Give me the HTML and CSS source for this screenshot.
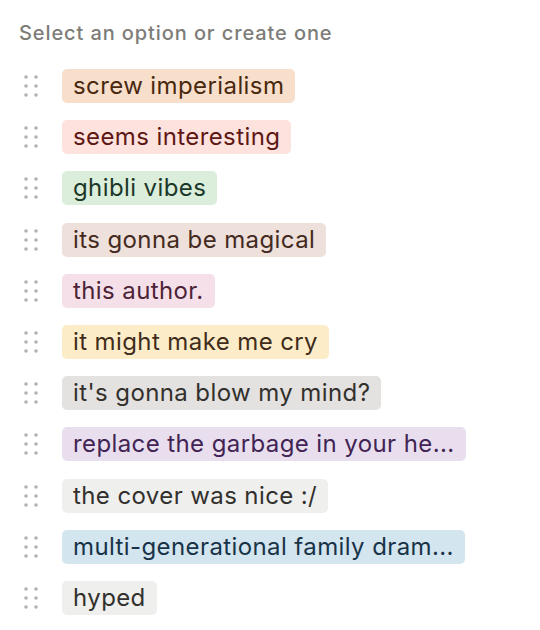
FILE: index.html
```html
<!DOCTYPE html>
<html lang="en">
<head>
  <meta charset="UTF-8" />
  <title>Select an option</title>
  <link rel="stylesheet" href="styles.css">
</head>
<body>
  <div class="menu">
    <div class="menu-title">Select an option or create one</div>

    <ul class="options">
      <li class="option">
        <svg class="handle" viewBox="0 0 14 22"><circle cx="2" cy="2" r="1.8"/><circle cx="12" cy="2" r="1.8"/><circle cx="2" cy="11" r="1.8"/><circle cx="12" cy="11" r="1.8"/><circle cx="2" cy="20" r="1.8"/><circle cx="12" cy="20" r="1.8"/></svg>
        <span class="tag orange">screw imperialism</span>
      </li>
      <li class="option">
        <svg class="handle" viewBox="0 0 14 22"><circle cx="2" cy="2" r="1.8"/><circle cx="12" cy="2" r="1.8"/><circle cx="2" cy="11" r="1.8"/><circle cx="12" cy="11" r="1.8"/><circle cx="2" cy="20" r="1.8"/><circle cx="12" cy="20" r="1.8"/></svg>
        <span class="tag red">seems interesting</span>
      </li>
      <li class="option">
        <svg class="handle" viewBox="0 0 14 22"><circle cx="2" cy="2" r="1.8"/><circle cx="12" cy="2" r="1.8"/><circle cx="2" cy="11" r="1.8"/><circle cx="12" cy="11" r="1.8"/><circle cx="2" cy="20" r="1.8"/><circle cx="12" cy="20" r="1.8"/></svg>
        <span class="tag green">ghibli vibes</span>
      </li>
      <li class="option">
        <svg class="handle" viewBox="0 0 14 22"><circle cx="2" cy="2" r="1.8"/><circle cx="12" cy="2" r="1.8"/><circle cx="2" cy="11" r="1.8"/><circle cx="12" cy="11" r="1.8"/><circle cx="2" cy="20" r="1.8"/><circle cx="12" cy="20" r="1.8"/></svg>
        <span class="tag brown">its gonna be magical</span>
      </li>
      <li class="option">
        <svg class="handle" viewBox="0 0 14 22"><circle cx="2" cy="2" r="1.8"/><circle cx="12" cy="2" r="1.8"/><circle cx="2" cy="11" r="1.8"/><circle cx="12" cy="11" r="1.8"/><circle cx="2" cy="20" r="1.8"/><circle cx="12" cy="20" r="1.8"/></svg>
        <span class="tag pink">this author.</span>
      </li>
      <li class="option">
        <svg class="handle" viewBox="0 0 14 22"><circle cx="2" cy="2" r="1.8"/><circle cx="12" cy="2" r="1.8"/><circle cx="2" cy="11" r="1.8"/><circle cx="12" cy="11" r="1.8"/><circle cx="2" cy="20" r="1.8"/><circle cx="12" cy="20" r="1.8"/></svg>
        <span class="tag yellow">it might make me cry</span>
      </li>
      <li class="option">
        <svg class="handle" viewBox="0 0 14 22"><circle cx="2" cy="2" r="1.8"/><circle cx="12" cy="2" r="1.8"/><circle cx="2" cy="11" r="1.8"/><circle cx="12" cy="11" r="1.8"/><circle cx="2" cy="20" r="1.8"/><circle cx="12" cy="20" r="1.8"/></svg>
        <span class="tag gray">it's gonna blow my mind?</span>
      </li>
      <li class="option">
        <svg class="handle" viewBox="0 0 14 22"><circle cx="2" cy="2" r="1.8"/><circle cx="12" cy="2" r="1.8"/><circle cx="2" cy="11" r="1.8"/><circle cx="12" cy="11" r="1.8"/><circle cx="2" cy="20" r="1.8"/><circle cx="12" cy="20" r="1.8"/></svg>
        <span class="tag purple">replace the garbage in your he...</span>
      </li>
      <li class="option">
        <svg class="handle" viewBox="0 0 14 22"><circle cx="2" cy="2" r="1.8"/><circle cx="12" cy="2" r="1.8"/><circle cx="2" cy="11" r="1.8"/><circle cx="12" cy="11" r="1.8"/><circle cx="2" cy="20" r="1.8"/><circle cx="12" cy="20" r="1.8"/></svg>
        <span class="tag default">the cover was nice :/</span>
      </li>
      <li class="option">
        <svg class="handle" viewBox="0 0 14 22"><circle cx="2" cy="2" r="1.8"/><circle cx="12" cy="2" r="1.8"/><circle cx="2" cy="11" r="1.8"/><circle cx="12" cy="11" r="1.8"/><circle cx="2" cy="20" r="1.8"/><circle cx="12" cy="20" r="1.8"/></svg>
        <span class="tag blue">multi-generational family dram...</span>
      </li>
      <li class="option">
        <svg class="handle" viewBox="0 0 14 22"><circle cx="2" cy="2" r="1.8"/><circle cx="12" cy="2" r="1.8"/><circle cx="2" cy="11" r="1.8"/><circle cx="12" cy="11" r="1.8"/><circle cx="2" cy="20" r="1.8"/><circle cx="12" cy="20" r="1.8"/></svg>
        <span class="tag default">hyped</span>
      </li>
    </ul>
  </div>
</body>
</html>
```

FILE: styles.css
```css
body {
  margin: 0;
  background: #ffffff;
  font-family: Inter, "Noto Sans", sans-serif;
  color: #37352f;
}
.menu {
  padding: 20px 0 0 19px;
}
.menu-title {
  font-size: 20px;
  line-height: 26px;
  font-weight: 500;
  letter-spacing: 0.9px;
  color: #7d7c78;
}
.options {
  list-style: none;
  margin: 23px 0 0 0;
  padding: 0;
  display: flex;
  flex-direction: column;
  gap: 17.2px;
}
.option {
  display: flex;
  align-items: center;
  height: 34px;
}
.handle {
  width: 14px;
  height: 22px;
  margin: 0 24px 0 5px;
  fill: #b3b2ae;
  flex-shrink: 0;
}
.tag {
  display: block;
  padding: 0 11px;
  height: 34px;
  line-height: 34px;
  border-radius: 5px;
  font-size: 24px;
  letter-spacing: 0.4px;
  white-space: nowrap;
}
.orange { background: #f8dfcb; color: #49290e; }
.red { background: #fde2dd; color: #5d1715; }
.green { background: #dbeddb; color: #1c3829; }
.brown { background: #eee0da; color: #442a1e; }
.pink { background: #f5e0e9; color: #4c2337; }
.yellow { background: #fdecc8; color: #402c1b; }
.gray { background: #e3e2e0; color: #32302c; }
.purple { background: #e8deee; color: #412454; }
.default { background: #efefee; color: #32302c; }
.blue { background: #d3e5ef; color: #183347; }
```
